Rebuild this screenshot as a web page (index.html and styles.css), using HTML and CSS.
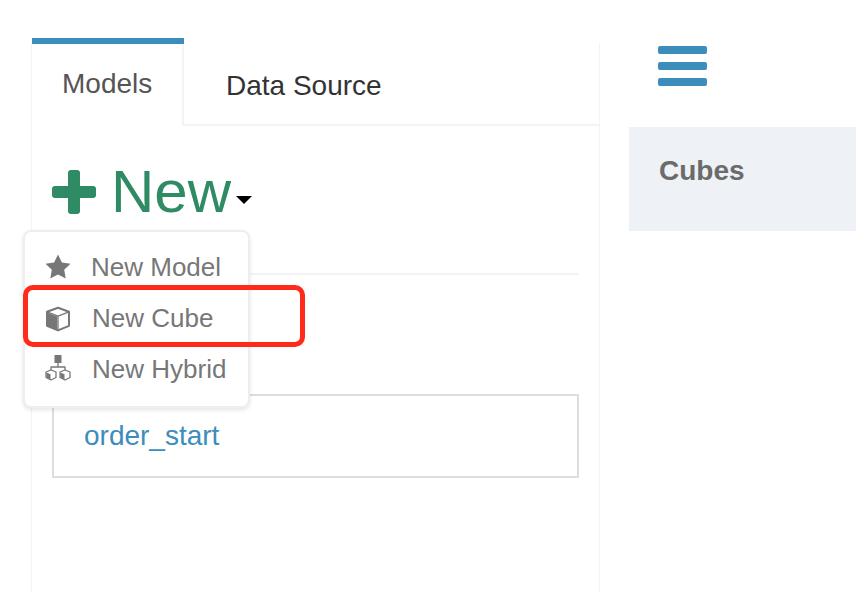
FILE: index.html
```html
<!DOCTYPE html>
<html lang="en">
<head>
    <meta charset="UTF-8">
    <meta name="viewport" content="width=device-width, initial-scale=1.0">
    <title>Models</title>
    <link rel="stylesheet" href="styles.css">
</head>
<body>
    <div class="page">
        <div class="models-panel">
            <div class="tabs">
                <div class="tab active">Models</div>
                <div class="tab">Data Source</div>
            </div>
            <div class="tab-body">
                <div class="new-button">
                    <svg class="plus-icon" viewBox="0 0 44 44"><path d="M16 3a3 3 0 0 1 3-3h6a3 3 0 0 1 3 3v13h13a3 3 0 0 1 3 3v6a3 3 0 0 1-3 3H28v13a3 3 0 0 1-3 3h-6a3 3 0 0 1-3-3V28H3a3 3 0 0 1-3-3v-6a3 3 0 0 1 3-3h13z"/></svg>
                    <span class="new-label">New</span>
                    <span class="caret"></span>
                </div>
                <div class="divider"></div>
                <div class="model-box">
                    <a href="#">order_start</a>
                </div>

                <!-- dropdown sits over the list -->
                <div class="dropdown">
                    <div class="dropdown-item first">
                        <svg class="item-icon" viewBox="0 0 26 26"><path d="M13 .5l3.900 8 8.600 1.200-6.300 6.100 1.500 8.700-7.700-4.100-7.700 4.100 1.500-8.700L.5 9.700l8.600-1.200z"/></svg>
                        <span>New Model</span>
                    </div>
                    <div class="dropdown-item">
                        <svg class="item-icon" viewBox="0 0 26 26"><path class="outline" d="M13 1.800l11 4v14l-11 4.600-11-4.600v-14z"/><path d="M2 6.500l10.200 4v13.400L2 19.800z"/><path class="outline thin" d="M2 5.800l11 4.400 11-4.400M13 10.200v14"/></svg>
                        <span>New Cube</span>
                    </div>
                    <div class="dropdown-item last">
                        <svg class="item-icon" viewBox="0 0 26 26"><rect x="9.500" y="0" width="7" height="8"/><path class="outline thin" d="M13 8v4M6 15v-3h14v3"/><path class="outline thin" d="M6 15l5 2v5.500l-5 2.500-5-2.500V17z"/><path d="M1.500 17.500l4 1.800v5.200l-4-2z"/><path class="outline thin" d="M20 15l5 2v5.500l-5 2.500-5-2.500V17z"/><path d="M15.500 17.500l4 1.800v5.200l-4-2z"/></svg>
                        <span>New Hybrid</span>
                    </div>
                </div>
                <div class="highlight"></div>
            </div>
        </div>
        <div class="side">
            <div class="hamburger">
                <span></span>
                <span></span>
                <span></span>
            </div>
            <div class="cubes-title">Cubes</div>
        </div>
    </div>
</body>
</html>
```

FILE: styles.css
```css
* {
    margin: 0;
    padding: 0;
    box-sizing: border-box;
    font-family: "Liberation Sans", Arial, sans-serif;
}

body {
    background: #fff;
    height: 593px;
    overflow: hidden;
}

.page {
    display: flex;
    height: 593px;
    padding: 38px 0 0 31px;
}

.models-panel {
    width: 569px;
    margin-top: 5px;
    border-left: 1px solid #f4f4f4;
    border-right: 1px solid #f4f4f4;
    display: flex;
    flex-direction: column;
}

.tabs {
    display: flex;
    height: 88px;
    margin-top: -5px;
}

.tab {
    font-size: 28px;
    color: #333;
    flex: 1;
    padding: 32px 0 0 42px;
    border-bottom: 2px solid #f4f4f4;
}

.tab.active {
    flex: none;
    width: 152px;
    color: #555;
    padding: 24px 0 0 30px;
    border-top: 6px solid #3c8dbc;
    border-bottom: none;
    box-shadow: inset -2px 0 0 #f4f4f4;
}

.tab-body {
    position: relative;
    flex: 1;
    padding: 0 20px;
}

.new-button {
    display: flex;
    align-items: center;
    height: 96px;
    padding-top: 36px;
    color: #2e8b63;
}

.plus-icon {
    width: 44px;
    height: 44px;
    fill: #2e8b63;
    margin-right: 15px;
}

.new-label {
    font-size: 60px;
    line-height: 70px;
}

.caret {
    width: 0;
    height: 0;
    margin: 16px 0 0 5px;
    border-top: 8px solid #000;
    border-left: 8px solid transparent;
    border-right: 8px solid transparent;
}

.divider {
    height: 2px;
    background: #f4f4f4;
    margin-top: 51px;
}

.model-box {
    height: 84px;
    margin-top: 119px;
    border: 2px solid #ddd;
    padding: 24px 30px;
    font-size: 28px;
}

.model-box a {
    color: #3c8dbc;
    text-decoration: none;
}

.dropdown {
    position: absolute;
    left: -9px;
    top: 104px;
    width: 227px;
    height: 178px;
    background: #fff;
    border: 2px solid #eee;
    border-radius: 8px;
    box-shadow: 0 2px 4px rgba(0, 0, 0, 0.1);
    padding-top: 10px;
}

.dropdown-item {
    display: flex;
    align-items: center;
    height: 51px;
    padding-left: 20px;
    font-size: 26px;
    color: #777;
}

.dropdown-item span {
    margin-left: 21px;
}

.dropdown-item.first span {
    margin-left: 20px;
}

.item-icon {
    width: 26px;
    height: 26px;
    fill: #777;
    flex: none;
}

.dropdown-item.first .item-icon {
    margin-top: -2px;
}

.dropdown-item.last .item-icon {
    margin-top: -4px;
}

.outline {
    fill: none;
    stroke: #777;
    stroke-width: 2;
    stroke-linejoin: round;
}

.outline.thin {
    stroke-width: 1.300;
}

.highlight {
    position: absolute;
    left: -9px;
    top: 159px;
    width: 282px;
    height: 62px;
    border: 5px solid #ff2a1a;
    border-radius: 10px;
}

.side {
    flex: 1;
    margin-left: 29px;
}

.hamburger {
    display: flex;
    flex-direction: column;
    gap: 8px;
    width: 49px;
    margin: 8px 0 0 29px;
}

.hamburger span {
    height: 8px;
    background: #3c8dbc;
    border-radius: 2px;
}

.cubes-title {
    height: 104px;
    margin-top: 41px;
    background: #eef1f6;
    padding: 28px 30px;
    font-size: 28px;
    font-weight: bold;
    color: #6b6b6b;
}
```
